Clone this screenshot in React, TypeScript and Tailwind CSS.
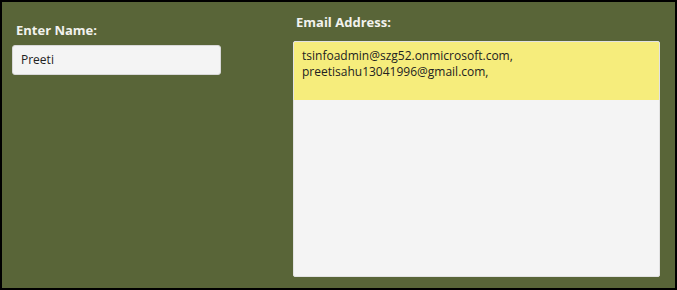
import React from 'react';

const font = { fontFamily: '"Open Sans", "Noto Sans", sans-serif' };

export default function App() {
  return (
    <div className="w-[677px] h-[290px] border-2 border-black bg-[#596538] flex" style={font}>
      {/* Name column */}
      <div className="w-[291px] pl-[10px] pt-[19px] flex flex-col">
        <label className="pl-[4px] text-[13px] font-bold text-[#f2f2ee] leading-[18px]">Enter Name:</label>
        <div className="mt-[6px] w-[209px] h-[30px] rounded-[3px] bg-[#f4f4f4] border border-[#d8d8d8] flex items-center pl-[8px] text-[12px] text-[#222]">
          Preeti
        </div>
      </div>

      {/* Email column */}
      <div className="flex-1 pt-[11px] pr-[15px] flex flex-col">
        <label className="pl-[3px] text-[13px] font-bold text-[#f2f2ee] leading-[18px]">Email Address:</label>
        <div className="mt-[10px] h-[236px] rounded-[2px] bg-[#f4f4f4] border border-[#e2e2e2] overflow-hidden flex flex-col">
          <div className="h-[58px] bg-[#f6ed7c] px-[8px] pt-[6px] text-[12px] leading-[16px] text-[#222]">
            <div>tsinfoadmin@szg52.onmicrosoft.com,</div>
            <div>preetisahu13041996@gmail.com,</div>
          </div>
        </div>
      </div>
    </div>
  );
}
